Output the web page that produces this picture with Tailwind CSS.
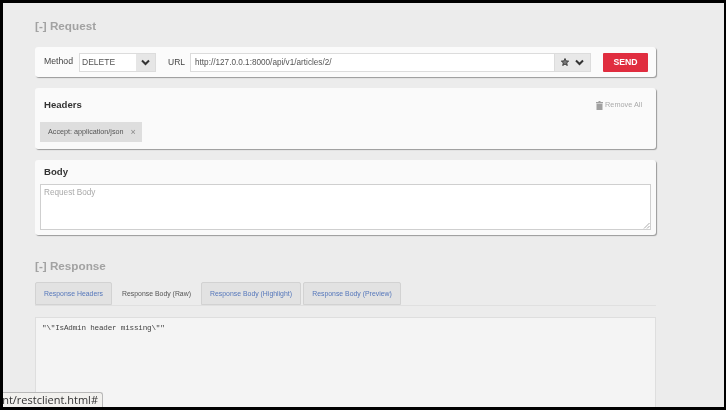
<!DOCTYPE html>
<html>
<head>
<meta charset="utf-8">
<script src="https://cdn.jsdelivr.net/npm/@tailwindcss/browser@4"></script>
</head>
<body class="m-0">
<div class="w-[726px] h-[410px] bg-black pt-[3px] pl-[3px] pr-[2px] pb-[3px] overflow-hidden font-['Liberation_Sans',sans-serif]">
  <div class="relative w-full h-full bg-[#ececec] overflow-hidden pl-[32px] pt-[15px] blur-[0.4px]">
    <div class="w-[621px] flex flex-col">
      <h2 class="h-[16px] leading-[16px] text-[11.7px] font-bold text-[#a2a2a2]">[-] Request</h2>

      <div class="mt-[13px] h-[30px] bg-[#fbfbfb] rounded-[3px] shadow-[1px_1px_1px_#9a9a9a] flex items-center pl-[9px] pr-[8px] text-[8.7px] text-[#444]">
        <span class="w-[35px]">Method</span>
        <div class="flex h-[19px] w-[77px] border border-[#dcdcdc] bg-white">
          <span class="flex-1 pl-[2px] text-[8.5px] leading-[17px] text-[#555]">DELETE</span>
          <span class="w-[19px] bg-[#e6e6e6] flex items-center justify-center">
            <svg width="9" height="7" viewBox="0 0 9 7"><path d="M1 1.5 L4.5 5 L8 1.5" fill="none" stroke="#333" stroke-width="2"/></svg>
          </span>
        </div>
        <span class="ml-[12px] w-[22px] text-[8.5px]">URL</span>
        <div class="flex-1 flex h-[19px] border border-[#dcdcdc] bg-white">
          <span class="flex-1 pl-[4px] text-[8.2px] leading-[17px] text-[#555]">http://127.0.0.1:8000/api/v1/articles/2/</span>
          <span class="w-[36px] bg-[#e8e8e8] border-l border-[#dcdcdc] flex items-center justify-center gap-[6px]">
            <svg width="8" height="8" viewBox="0 0 10 10"><path d="M5 .6 6.3 3.6 9.6 3.9 7.1 6.1 7.9 9.4 5 7.6 2.1 9.4 2.9 6.1.4 3.9 3.7 3.6Z" fill="#777" stroke="#333" stroke-width="1.1"/></svg>
            <svg width="9" height="7" viewBox="0 0 9 7"><path d="M1 1.5 L4.5 5 L8 1.5" fill="none" stroke="#333" stroke-width="2"/></svg>
          </span>
        </div>
        <span class="ml-[12px] w-[45px] h-[19px] bg-[#e02d3f] rounded-[1px] text-white font-bold text-[8.7px] leading-[19px] text-center">SEND</span>
      </div>

      <div class="mt-[11px] h-[61px] bg-[#fafafa] rounded-[3px] shadow-[1px_1px_1px_#9a9a9a] relative pl-[5px] pt-[11px]">
        <div class="flex items-center justify-between pl-[4px] pr-[14px] h-[13px]">
          <span class="text-[9.6px] font-bold text-[#333]">Headers</span>
          <span class="flex items-center gap-[3px] text-[7.3px] text-[#aaa]">
            <svg class="mr-[-1px] ml-[1px] mb-[1px]" width="7" height="9" viewBox="0 0 7 9"><path d="M2.5 0h2v1H7v1.2H0V1h2.5ZM.5 2.8h6V9h-6Z" fill="#a0a0a0"/></svg>
            Remove All
          </span>
        </div>
        <div class="mt-[10px] w-[102px] h-[20px] bg-[#dedede] flex items-center pl-[8px] gap-[7px] text-[7.2px] text-[#555]">
          <span>Accept: application/json</span><span class="text-[#888] text-[9px] leading-none">×</span>
        </div>
      </div>

      <div class="mt-[11px] h-[75px] bg-[#fafafa] rounded-[3px] shadow-[1px_1px_1px_#9a9a9a] flex flex-col pl-[5px] pr-[5px]">
        <div class="h-[24px] pl-[4px] leading-[24px] text-[9.6px] font-bold text-[#333]">Body</div>
        <div class="relative h-[46px] bg-white border border-[#cfcfcf] pl-[3px] pt-[2px] text-[8.2px] text-[#aaa]">
          Request Body
          <svg class="absolute right-0 bottom-0" width="7" height="7" viewBox="0 0 7 7"><path d="M6.5 1 1 6.5M6.5 4 4 6.5" stroke="#aaa" stroke-width="1"/></svg>
        </div>
      </div>

      <h2 class="mt-[22px] h-[17px] leading-[17px] text-[11.7px] font-bold text-[#a2a2a2]">[-] Response</h2>

      <div class="mt-[8px] h-[24px] flex items-start border-b border-[#e0e0e0] text-[6.9px]">
        <span class="h-[23px] w-[77px] bg-[#e2e2e2] border border-[#d2d2d2] rounded-t-[2px] text-[#5577bb] text-center leading-[22px]">Response Headers</span>
        <span class="h-[24px] w-[89px] text-[#555] text-center leading-[24px]">Response Body (Raw)</span>
        <span class="h-[23px] w-[100px] bg-[#e2e2e2] border border-[#d2d2d2] rounded-t-[2px] text-[#5577bb] text-center leading-[22px]">Response Body (Highlight)</span>
        <span class="ml-[2px] h-[23px] w-[98px] bg-[#e2e2e2] border border-[#d2d2d2] rounded-t-[2px] text-[#5577bb] text-center leading-[22px]">Response Body (Preview)</span>
      </div>

      <pre class="mt-[11px] h-[120px] bg-[#f4f4f4] border border-[#dedede] pl-[6px] pt-[4px] text-[7.6px] tracking-[-0.18px] leading-[12px] text-[#444] font-['Liberation_Mono',monospace]">"\"IsAdmin header missing\""</pre>
    </div>

    <div class="absolute left-0 bottom-0 w-[100px] h-[15px] bg-[#f2f1ee] border-t border-r border-[#b8b8b8] rounded-tr-[3px] overflow-hidden flex justify-end items-center pr-[4px] text-[11px] text-[#333] font-['Open_Sans',sans-serif] whitespace-nowrap">nt/restclient.html#</div>
  </div>
</div>
</body>
</html>
